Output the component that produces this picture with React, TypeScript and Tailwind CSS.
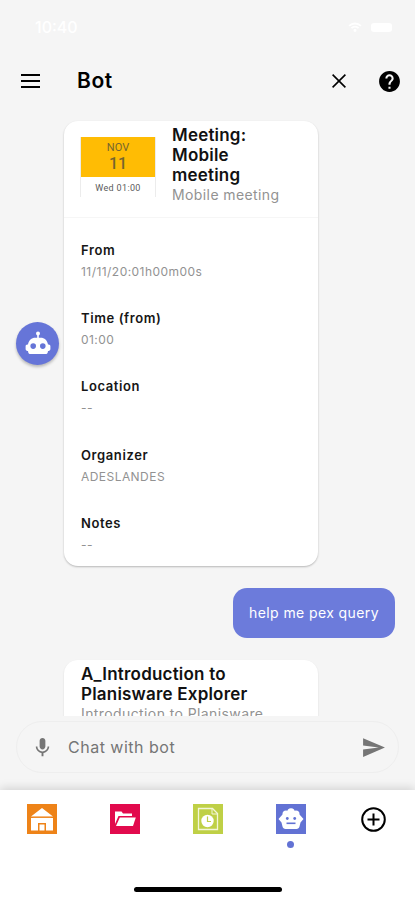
import type { ReactNode } from "react"

const fields = [
  { label: "From", value: "11/11/20:01h00m00s" },
  { label: "Time (from)", value: "01:00" },
  { label: "Location", value: "--" },
  { label: "Organizer", value: "ADESLANDES" },
  { label: "Notes", value: "--" },
]

function StatusBar() {
  return (
    <div className="flex h-[54px] shrink-0 items-center justify-between pl-[35px] pr-[23px] text-white">
      <span className="text-[16px] font-medium">10:40</span>
      <div className="flex items-center gap-[9px]">
        <svg width="14" height="10" viewBox="0 0 15 11" fill="none" stroke="currentColor" strokeWidth="2">
          <path d="M1 4.2a9.5 9.5 0 0 1 13 0M3.6 6.8a5.6 5.6 0 0 1 7.8 0" />
          <circle cx="7.5" cy="9.2" r="0.7" fill="currentColor" />
        </svg>
        <div className="h-[9px] w-[21px] rounded-[3px] bg-white" />
      </div>
    </div>
  )
}

function Header() {
  return (
    <header className="flex h-[54px] shrink-0 items-center pl-[21px] pr-[13px] text-black">
      <button aria-label="Menu">
        <svg width="19" height="14" viewBox="0 0 19 14" stroke="currentColor" strokeWidth="1.8">
          <path d="M0 1h19M0 7h19M0 13h19" />
        </svg>
      </button>
      <h1 className="ml-[37px] flex-1 text-[21px] font-semibold tracking-[0.6px]">Bot</h1>
      <button aria-label="Close">
        <svg width="14" height="14" viewBox="0 0 14 14" stroke="currentColor" strokeWidth="1.6">
          <path d="M.6.6l12.8 12.8M13.4.6L.6 13.4" />
        </svg>
      </button>
      <button aria-label="Help" className="ml-[31px]">
        <svg width="25" height="25" viewBox="0 0 24 24" fill="currentColor">
          <path d="M12 2C6.48 2 2 6.48 2 12s4.48 10 10 10 10-4.48 10-10S17.52 2 12 2zm1 17h-2v-2h2v2zm2.07-7.75l-.9.92C13.45 12.9 13 13.5 13 15h-2v-.5c0-1.1.45-2.1 1.17-2.83l1.24-1.26c.37-.36.59-.86.59-1.41 0-1.1-.9-2-2-2s-2 .9-2 2H8c0-2.21 1.79-4 4-4s4 1.79 4 4c0 .88-.36 1.68-.93 2.25z" />
        </svg>
      </button>
    </header>
  )
}

function BotAvatar() {
  return (
    <div className="flex size-[43px] items-center justify-center rounded-full bg-[#6675d8] shadow-[0_2px_3px_rgba(0,0,0,0.25)]">
      <svg width="26" height="24" viewBox="0 0 26 24" fill="white">
        <circle cx="13" cy="2.6" r="2" />
        <path d="M12.2 3h1.6v5h-1.6z" />
        <path
          fillRule="evenodd"
          d="M10.4 6.8h5.2c4 0 6.600 2.700 7.400 6.700h.6c1 0 1.800.8 1.800 1.800v2.800c0 1-.8 1.800-1.800 1.800H23c-.2 2.200-1 3.100-2.700 3.100H5.700C4 23 3.200 22.100 3 19.900h-.6c-1 0-1.800-.8-1.800-1.800v-2.800c0-1 .8-1.800 1.800-1.800H3c.8-4 3.400-6.700 7.400-6.700zM8.200 12.300a2.800 2.800 0 1 0 0 5.600 2.800 2.800 0 0 0 0-5.600zm9.600 0a2.800 2.800 0 1 0 0 5.600 2.800 2.800 0 0 0 0-5.600z"
        />
      </svg>
    </div>
  )
}

function MeetingCard() {
  return (
    <div className="w-[254px] rounded-[14px] bg-white shadow-[0_1px_2px_rgba(0,0,0,0.25)]">
      <div className="flex h-[97px] border-b border-[#f6f6f6] pl-4 pt-1">
        <div className="mt-[12px] h-[60px] w-[76px] border-x border-[#ececec] text-center font-['Roboto',sans-serif] text-[#5b5b5b]">
          <div className="h-10 bg-[#ffbc04] pt-1 text-[#75662f]">
            <div className="text-[11px] leading-[13px]">NOV</div>
            <div className="text-[16px] font-medium leading-[19px]">11</div>
          </div>
          <div className="pt-1 text-[9px] leading-[14px] tracking-[0.35px]">Wed 01:00</div>
        </div>
        <div className="ml-4">
          <h2 className="w-[100px] text-[17px] font-semibold leading-5 tracking-[0.2px] text-[#111]">
            Meeting: Mobile meeting
          </h2>
          <p className="text-[14px] leading-5 tracking-[0.4px] text-[#929292]">Mobile meeting</p>
        </div>
      </div>
      <dl className="flex flex-col gap-[26px] px-[17px] pb-[11px] pt-[22px]">
        {fields.map((field) => (
          <div key={field.label} className="h-[42.2px]">
            <dt className="text-[13px] font-semibold leading-5 tracking-[0.6px] text-[#161616]">{field.label}</dt>
            <dd className="mt-[3px] text-[12px] leading-[18px] tracking-[0.45px] text-[#929292]">{field.value}</dd>
          </div>
        ))}
      </dl>
    </div>
  )
}

function ChatInput() {
  return (
    <div className="mx-4 mt-[5px] flex h-[52px] shrink-0 items-center rounded-full border border-[#eeeeee] pl-[14px] pr-[12px] text-[#757575]">
      <svg width="23" height="25" viewBox="0 0 24 24" fill="currentColor">
        <path d="M12 14c1.660 0 2.990-1.340 2.990-3L15 5c0-1.660-1.340-3-3-3S9 3.340 9 5v6c0 1.660 1.340 3 3 3zm5.300-3c0 3-2.540 5.100-5.300 5.100S6.700 14 6.700 11H5c0 3.410 2.720 6.230 6 6.720V21h2v-3.280c3.280-.48 6-3.300 6-6.720h-1.700z" />
      </svg>
      <span className="ml-[14px] flex-1 text-[16px] tracking-[0.5px]">Chat with bot</span>
      <svg width="25" height="25" viewBox="0 0 24 24" fill="currentColor">
        <path d="M2.010 21L23 12 2.010 3 2 10l15 2-15 2z" />
      </svg>
    </div>
  )
}

function NavTile({ color, children }: { color: string; children: ReactNode }) {
  return (
    <div className={`flex size-[30px] items-center justify-center ${color}`}>
      <svg width="30" height="30" viewBox="0 0 30 30" fill="white">
        {children}
      </svg>
    </div>
  )
}

function BottomNav() {
  return (
    <nav className="flex h-[110px] shrink-0 flex-col items-center bg-white shadow-[0_-2px_9px_rgba(0,0,0,0.14)]">
      <div className="grid w-full grid-cols-5 justify-items-center pt-[14px]">
        <NavTile color="bg-[#ee8318]">
          <path d="M15 4L4 12.500h22zM4 14h22v12.500h-7v-7.500h-8v7.500H4z" />
          <path d="M12.500 20.500h5v6h-5z" />
          <path d="M6 12.700h18" stroke="#f5b77d" strokeWidth="1" />
        </NavTile>
        <NavTile color="bg-[#e20a4d]">
          <path d="M5 7.500h6.500l1.500 2h9v2.500H8.500L5 20z" />
          <path d="M9.800 13.500h16L23 22H6z" />
        </NavTile>
        <NavTile color="bg-[#bfd046]">
          <path d="M5.500 4.500h14l5 5v16h-19z" fill="none" stroke="#f3f6d8" strokeWidth="1.300" />
          <path d="M19 4.500v5.500h5.500" fill="none" stroke="#f3f6d8" />
          <circle cx="14.500" cy="17" r="6.200" />
          <path d="M14.500 12.500v5h3.500" fill="none" stroke="#bfd046" strokeWidth="1.200" />
        </NavTile>
        <div className="flex flex-col items-center gap-[7px]">
          <NavTile color="bg-[#6272d4]">
            <circle cx="15" cy="8" r="3.700" />
            <circle cx="10" cy="10" r="3.500" />
            <circle cx="20" cy="10" r="3.500" />
            <path d="M6.500 10.500h17L27.500 15l-3 3.500-1 4c-.3 1.500-1.500 2.500-3 2.500h-11c-1.500 0-2.700-1-3-2.500l-1-4-3-3.500z" />
            <g fill="#6272d4">
              <circle cx="11.300" cy="14.500" r="1.400" />
              <circle cx="18.700" cy="14.500" r="1.400" />
              <path d="M10.500 18.500h9v1.600h-9z" />
            </g>
          </NavTile>
          <div className="size-[7px] rounded-full bg-[#6272d4]" />
        </div>
        <svg className="mt-[3px]" width="25" height="25" viewBox="0 0 25 25" fill="none" stroke="black" strokeWidth="2">
          <circle cx="12.500" cy="12.500" r="11.300" />
          <path d="M12.500 6.500v12M6.500 12.500h12" />
        </svg>
      </div>
      <div className="mb-[8px] mt-auto h-[5px] w-[148px] rounded-full bg-black" />
    </nav>
  )
}

export default function App() {
  return (
    <div className="flex h-[900px] w-[415px] flex-col overflow-hidden bg-[#f5f5f5] font-['Inter',sans-serif]">
      <StatusBar />
      <Header />
      <main className="h-[608px] shrink-0 overflow-hidden px-4 pt-[13px]">
        <div className="flex items-center gap-[5px]">
          <BotAvatar />
          <MeetingCard />
        </div>
        <div className="mt-[22px] flex justify-end pr-1">
          <div className="flex h-[50px] w-[162px] items-center justify-center rounded-[14px] bg-[#6c7bdb] text-[14px] tracking-[0.4px] text-white">
            help me pex query
          </div>
        </div>
        <div className="ml-12 mt-[22px] w-[254px] rounded-t-[14px] bg-white px-[17px] pb-4 pt-1 shadow-[0_1px_2px_rgba(0,0,0,0.12)]">
          <h2 className="text-[17px] font-semibold leading-5 tracking-[0.2px] text-[#111]">
            A_Introduction to Planisware Explorer
          </h2>
          <p className="text-[14px] leading-[19px] tracking-[0.4px] text-[#929292]">Introduction to Planisware</p>
        </div>
      </main>
      <ChatInput />
      <div className="flex-1" />
      <BottomNav />
    </div>
  )
}
